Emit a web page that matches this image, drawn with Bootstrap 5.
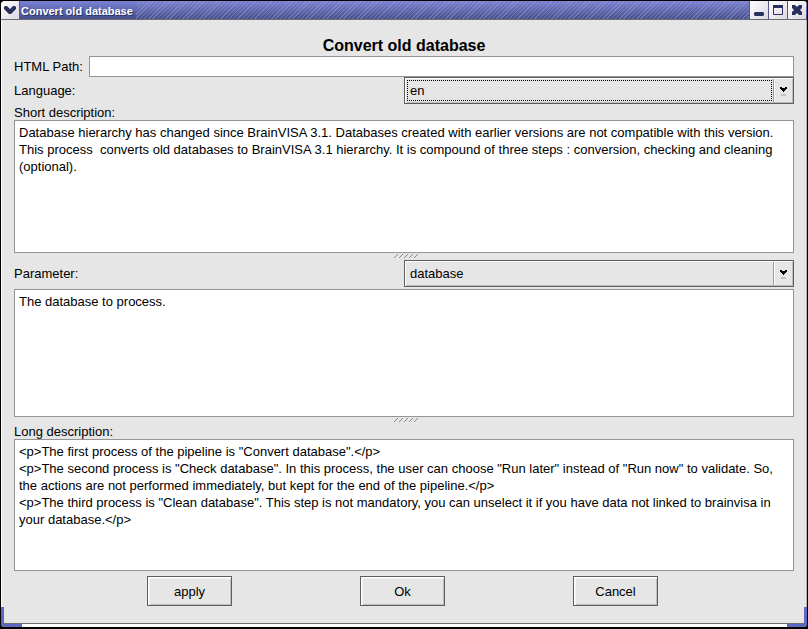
<!DOCTYPE html>
<html lang="en">
<head>
<meta charset="utf-8">
<meta name="viewport" content="width=device-width, initial-scale=1">
<title>Convert old database</title>
<link rel="stylesheet" href="https://cdn.jsdelivr.net/npm/bootstrap@5.3.0/dist/css/bootstrap.min.css">
<style>
html { background: #fff; }
body { font-family: "Liberation Sans", Arial, sans-serif; font-size: 13px; line-height: 17px; color: #000; background: #000; }
.win { background: #e6e6e6; border: 1px solid #000; border-bottom-width: 2px; border-radius: 5px; overflow: hidden; }
.titlebar { height: 19px; padding-right: 1px; border-bottom: 1px solid #6b6b76; background: linear-gradient(#7b82d6, #454f8a); }
.titlebar h1 { font-size: 11px; line-height: 18px; color: #fff; text-shadow: 1px 1px 0 #2b3265; padding: 1px 3px 0 1px; }
.hatch { background: repeating-linear-gradient(135deg, #a3a8c866 0 1px, #0000 1px 3px); }
.tb { width: 19px; height: 18px; padding: 0; border: 0; border-left: 1px solid #56568a; background: linear-gradient(135deg, #fff, #ddd6e0); }
.tb.menu { border-left: 0; border-right: 1px solid #56568a; }
.tb svg { display: block; margin: auto; }
.pane { padding: 15px 12px 0; border-left: 1px solid #fff; border-right: 1px solid #b5b5b5; }
.heading { font-size: 16px; line-height: 21px; }
.pathrow { gap: 6px; }
.line, .area { border: 1px solid #959595; border-radius: 0; background: #fff; color: #000; font: inherit; outline: 0; }
.line { height: 21px; padding: 0 4px; }
.area { display: block; width: 100%; padding: 3px 4px; line-height: 17px; resize: none; overflow: hidden; flex: 1 0 auto; }
.a1 { height: 133px; } .a2 { height: 128px; } .a3 { height: 132px; }
.combo { position: relative; border: 1px solid #5e5e5e; background: #e6e6e6; height: 27px; box-shadow: inset 1px 1px 0 #fff, inset -1px -1px 0 #bdbdbd; }
.combo select { appearance: none; width: 100%; height: 25px; border: 0; border-radius: 0; background: transparent; padding: 0 24px 0 5px; color: #000; font: inherit; outline: 0; }
.combo svg { position: absolute; right: 0; top: 0; pointer-events: none; }
.combo.focused::before { content: ""; position: absolute; left: 2px; top: 2px; bottom: 2px; right: 21px; border: 1px dotted #000; pointer-events: none; }
.grip { height: 6px; }
.grip svg { display: block; margin: auto; }
.param { padding: 1px 0 2px; }
.lab { line-height: 17px; height: 16px; }
.push { width: 85px; height: 30px; padding: 0; border: 1px solid #5e5e5e; border-radius: 0; background: #e6e6e6; color: #000; font-size: 13px; line-height: 17px; box-shadow: inset 1px 1px 0 #fff, inset 2px 2px 0 #f3f3f3, inset -1px -1px 0 #bdbdbd; }
.push:hover, .push:active { background: #eee !important; color: #000 !important; border-color: #5e5e5e !important; }
.actions { gap: 128px; padding: 5px 3px 17px 0; }
.frame { height: 4px; border-top: 1px solid #6e6e6e; background: linear-gradient(90deg, #5f69bf 21px, #fff 21px, #fff calc(100% - 20px), #5f69bf calc(100% - 20px)) padding-box; }
.win::before, .win::after { content: ""; position: absolute; bottom: 0; width: 3px; height: 20px; background: #5f69bf; }
.win::before { left: 0; } .win::after { right: 0; }
</style>
<script src="https://cdn.jsdelivr.net/npm/bootstrap@5.3.0/dist/js/bootstrap.bundle.min.js"></script>
</head>
<body>
<div class="win d-flex flex-column min-vh-100 position-relative">
  <header class="titlebar d-flex">
    <button class="tb menu" type="button" aria-label="Window menu"><svg width="12" height="10" viewBox="0 0 12 10"><path d="M1 1h2l3 3 3-3h2l1 1v2L7 9H5L0 4V2z" fill="#28305e"/></svg></button>
    <h1 class="m-0 fw-bold">Convert old database</h1>
    <div class="hatch flex-grow-1"></div>
    <button class="tb" type="button" aria-label="Minimize"><svg width="12" height="12" viewBox="0 0 12 12"><path d="M2 8h8l1 1v2l-1 1H2l-1-1V9z" fill="#28305e"/></svg></button>
    <button class="tb" type="button" aria-label="Maximize"><svg width="12" height="12" viewBox="0 0 12 12"><path d="M1.500 1.500h9v9h-9z" fill="none" stroke="#28305e" stroke-linejoin="round"/><path d="M1 1h10v3H1z" fill="#28305e"/></svg></button>
    <button class="tb" type="button" aria-label="Close"><svg width="12" height="12" viewBox="0 0 12 12"><path d="M1 1h3l2 2 2-2h3v3L9 6l2 2v3H8L6 9l-2 2H1V8l2-2-2-2z" fill="#28305e"/></svg></button>
  </header>
  <main class="pane d-flex flex-column flex-grow-1">
    <h2 class="heading text-center fw-bold m-0">Convert old database</h2>
    <div class="pathrow d-flex align-items-center">
      <label for="path">HTML Path:</label>
      <input id="path" type="text" class="line flex-grow-1">
    </div>
    <div class="row g-0 align-items-center">
      <label for="lang" class="col-6">Language:</label>
      <div class="col-6"><div class="combo focused"><select id="lang"><option>en</option><option>fr</option></select><svg width="20" height="25" viewBox="0 0 20 25"><path d="M.5 1v23" stroke="#999"/><path d="M1.500 1v23" stroke="#fff"/><path d="M7 9h2v1h3V9h2v2h-1v1h-1v1h-1v1h-1v-1H9v-1H8v-1H7z"/><path d="M8 16h5v2H8z" fill="#c0c0c0"/></svg></div></div>
    </div>
    <label for="short" class="lab">Short description:</label>
    <textarea id="short" class="area a1" spellcheck="false">Database hierarchy has changed since BrainVISA 3.1. Databases created with earlier versions are not compatible with this version. This process  converts old databases to BrainVISA 3.1 hierarchy. It is compound of three steps : conversion, checking and cleaning (optional).</textarea>
    <div class="grip"><svg width="28" height="6" viewBox="0 0 28 6"><path d="M4 5l4-4M9 5l4-4M14 5l4-4M19 5l4-4M24 5l4-4" stroke="#888" fill="none"/></svg></div>
    <div class="param row g-0 align-items-center">
      <label for="param" class="col-6">Parameter:</label>
      <div class="col-6"><div class="combo"><select id="param"><option>database</option></select><svg width="20" height="25" viewBox="0 0 20 25"><path d="M.5 1v23" stroke="#999"/><path d="M1.500 1v23" stroke="#fff"/><path d="M7 9h2v1h3V9h2v2h-1v1h-1v1h-1v1h-1v-1H9v-1H8v-1H7z"/><path d="M8 16h5v2H8z" fill="#c0c0c0"/></svg></div></div>
    </div>
    <textarea id="ptext" class="area a2" aria-label="Parameter description" spellcheck="false">The database to process.</textarea>
    <div class="grip"><svg width="28" height="6" viewBox="0 0 28 6"><path d="M4 5l4-4M9 5l4-4M14 5l4-4M19 5l4-4M24 5l4-4" stroke="#888" fill="none"/></svg></div>
    <label for="long" class="lab">Long description:</label>
    <textarea id="long" class="area a3" spellcheck="false">&lt;p&gt;The first process of the pipeline is "Convert database".&lt;/p&gt;
&lt;p&gt;The second process is "Check database". In this process, the user can choose "Run later" instead of "Run now" to validate. So, the actions are not performed immediately, but kept for the end of the pipeline.&lt;/p&gt;
&lt;p&gt;The third process is "Clean database". This step is not mandatory, you can unselect it if you have data not linked to brainvisa in your database.&lt;/p&gt;</textarea>
    <div class="actions d-flex justify-content-center">
      <button type="button" class="btn push">apply</button>
      <button type="button" class="btn push">Ok</button>
      <button type="button" class="btn push">Cancel</button>
    </div>
  </main>
  <div class="frame"></div>
</div>
</body>
</html>
